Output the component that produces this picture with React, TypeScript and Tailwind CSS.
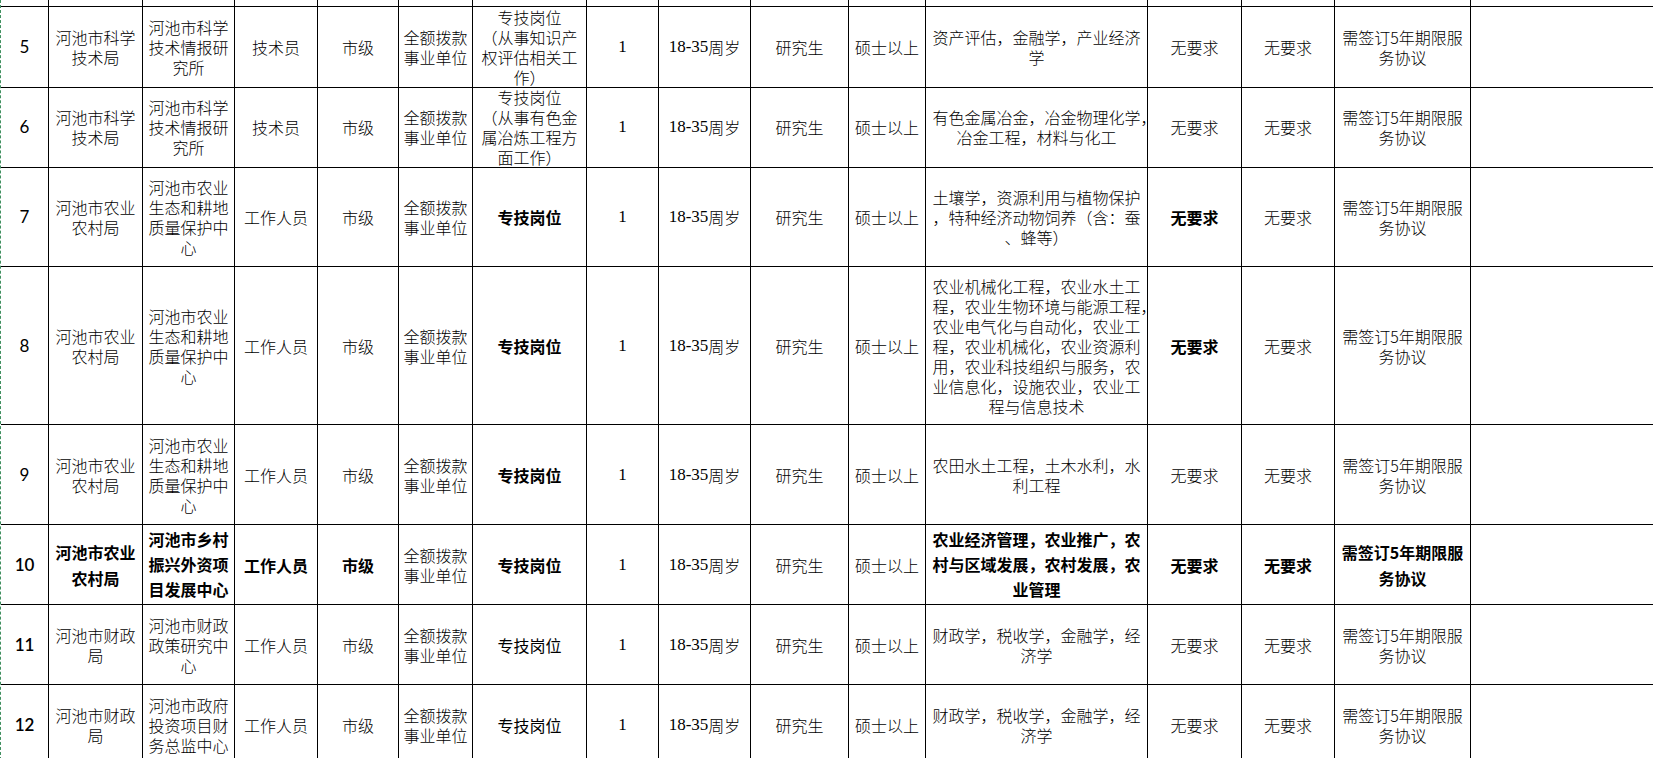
type Cell = {
  t: string[]
  b?: boolean
  n?: boolean
  lh?: string
}

const COLS =
  'grid grid-cols-[48px_94px_92px_83px_81px_74px_114px_72px_92px_98px_77px_222px_94px_93px_136px_1fr]'

const cjk = "font-['Noto_Sans_CJK_SC',sans-serif]"

const svc: Cell = { t: ['需签订5年期限服', '务协议'] }

type Row = { no: string; noBold?: boolean; h: string; cells: Cell[] }

const rows: Row[] = [
  {
    no: '5',
    h: 'h-[80px]',
    cells: [
      { t: ['河池市科学', '技术局'] },
      { t: ['河池市科学', '技术情报研', '究所'] },
      { t: ['技术员'] },
      { t: ['市级'] },
      { t: ['全额拨款', '事业单位'] },
      { t: ['专技岗位', '（从事知识产', '权评估相关工', '作）'] },
      { t: ['资产评估，金融学，产业经济', '学'] },
      { t: ['无要求'] },
      { t: ['无要求'] },
      svc,
    ],
  },
  {
    no: '6',
    h: 'h-[80px]',
    cells: [
      { t: ['河池市科学', '技术局'] },
      { t: ['河池市科学', '技术情报研', '究所'] },
      { t: ['技术员'] },
      { t: ['市级'] },
      { t: ['全额拨款', '事业单位'] },
      { t: ['专技岗位', '（从事有色金', '属冶炼工程方', '面工作）'] },
      { t: ['有色金属冶金，冶金物理化学，', '冶金工程，材料与化工'] },
      { t: ['无要求'] },
      { t: ['无要求'] },
      svc,
    ],
  },
  {
    no: '7',
    h: 'h-[100px]',
    cells: [
      { t: ['河池市农业', '农村局'] },
      { t: ['河池市农业', '生态和耕地', '质量保护中', '心'] },
      { t: ['工作人员'] },
      { t: ['市级'] },
      { t: ['全额拨款', '事业单位'] },
      { t: ['专技岗位'], b: true },
      { t: ['土壤学，资源利用与植物保护', '，特种经济动物饲养（含：蚕', '、蜂等）'] },
      { t: ['无要求'], b: true },
      { t: ['无要求'] },
      svc,
    ],
  },
  {
    no: '8',
    h: 'h-[158px]',
    cells: [
      { t: ['河池市农业', '农村局'] },
      { t: ['河池市农业', '生态和耕地', '质量保护中', '心'] },
      { t: ['工作人员'] },
      { t: ['市级'] },
      { t: ['全额拨款', '事业单位'] },
      { t: ['专技岗位'], b: true },
      {
        t: [
          '农业机械化工程，农业水土工',
          '程，农业生物环境与能源工程，',
          '农业电气化与自动化，农业工',
          '程，农业机械化，农业资源利',
          '用，农业科技组织与服务，农',
          '业信息化，设施农业，农业工',
          '程与信息技术',
        ],
      },
      { t: ['无要求'], b: true },
      { t: ['无要求'] },
      svc,
    ],
  },
  {
    no: '9',
    h: 'h-[100px]',
    cells: [
      { t: ['河池市农业', '农村局'] },
      { t: ['河池市农业', '生态和耕地', '质量保护中', '心'] },
      { t: ['工作人员'] },
      { t: ['市级'] },
      { t: ['全额拨款', '事业单位'] },
      { t: ['专技岗位'], b: true },
      { t: ['农田水土工程，土木水利，水', '利工程'] },
      { t: ['无要求'] },
      { t: ['无要求'] },
      svc,
    ],
  },
  {
    no: '10',
    noBold: true,
    h: 'h-[80px]',
    cells: [
      { t: ['河池市农业', '农村局'], b: true, lh: 'leading-[26px]' },
      { t: ['河池市乡村', '振兴外资项', '目发展中心'], b: true, lh: 'leading-[25px]' },
      { t: ['工作人员'], b: true },
      { t: ['市级'], b: true },
      { t: ['全额拨款', '事业单位'] },
      { t: ['专技岗位'], b: true },
      {
        t: ['农业经济管理，农业推广，农', '村与区域发展，农村发展，农', '业管理'],
        b: true,
        lh: 'leading-[25px]',
      },
      { t: ['无要求'], b: true },
      { t: ['无要求'], b: true },
      { t: ['需签订5年期限服', '务协议'], b: true, lh: 'leading-[26px]' },
    ],
  },
  {
    no: '11',
    noBold: true,
    h: 'h-[80px]',
    cells: [
      { t: ['河池市财政', '局'] },
      { t: ['河池市财政', '政策研究中', '心'] },
      { t: ['工作人员'] },
      { t: ['市级'] },
      { t: ['全额拨款', '事业单位'] },
      { t: ['专技岗位'], n: true },
      { t: ['财政学，税收学，金融学，经', '济学'] },
      { t: ['无要求'] },
      { t: ['无要求'] },
      svc,
    ],
  },
  {
    no: '12',
    noBold: true,
    h: 'h-[80px]',
    cells: [
      { t: ['河池市财政', '局'] },
      { t: ['河池市政府', '投资项目财', '务总监中心'] },
      { t: ['工作人员'] },
      { t: ['市级'] },
      { t: ['全额拨款', '事业单位'] },
      { t: ['专技岗位'], n: true },
      { t: ['财政学，税收学，金融学，经', '济学'] },
      { t: ['无要求'] },
      { t: ['无要求'] },
      svc,
    ],
  },
]

function Line({ s }: { s: string }) {
  // Excel lets a trailing comma hang past the wrap width
  if (s.length > 13 && s.endsWith('，')) {
    return (
      <div className="whitespace-nowrap">
        {s.slice(0, -1)}
        <span className="inline-block w-0">，</span>
      </div>
    )
  }
  return <div className="whitespace-nowrap">{s}</div>
}

function TextCell({ c }: { c: Cell }) {
  const weight = c.b ? 'font-bold' : c.n ? 'font-normal' : 'font-light'
  return (
    <div
      className={`flex flex-col items-center justify-center overflow-visible border-r border-b border-black text-center text-[16px] text-black ${cjk} ${weight} ${c.lh ?? 'leading-[20px]'}`}
    >
      {c.t.map((s, i) => (
        <Line key={i} s={s} />
      ))}
    </div>
  )
}

function TableRow({ r }: { r: Row }) {
  const [c1, c2, c3, c4, c5, c6, c11, c12, c13, c14] = r.cells
  return (
    <div className={`${COLS} ${r.h}`}>
      <div
        className={`flex items-center justify-center border-r border-b border-black font-['Lato',sans-serif] text-[17px] text-black ${r.noBold ? 'font-semibold' : 'font-normal'}`}
      >
        {r.no}
      </div>
      <TextCell c={c1} />
      <TextCell c={c2} />
      <TextCell c={c3} />
      <TextCell c={c4} />
      <TextCell c={c5} />
      <TextCell c={c6} />
      <div className="flex items-center justify-center border-r border-b border-black font-['Liberation_Serif',serif] text-[17px] text-black">
        1
      </div>
      <div className="flex items-center justify-center border-r border-b border-black text-black">
        <span className="font-['Liberation_Serif',serif] text-[17px]">18-35</span>
        <span className={`${cjk} text-[16px] font-light`}>周岁</span>
      </div>
      <TextCell c={{ t: ['研究生'] }} />
      <TextCell c={{ t: ['硕士以上'] }} />
      <TextCell c={c11} />
      <TextCell c={c12} />
      <TextCell c={c13} />
      <TextCell c={c14} />
      <div className="border-b border-black" />
    </div>
  )
}

export default function App() {
  return (
    <div className="h-[758px] w-full overflow-hidden bg-white">
      <div className="border-l border-dashed border-[#3f8f5f]">
        {/* tail of the row above */}
        <div className={`${COLS} h-[7px]`}>
          {[...Array(15)].map((_, i) => (
            <div key={i} className="border-r border-b border-black" />
          ))}
          <div className="border-b border-black" />
        </div>
        {rows.map((r) => (
          <TableRow key={r.no} r={r} />
        ))}
      </div>
    </div>
  )
}
